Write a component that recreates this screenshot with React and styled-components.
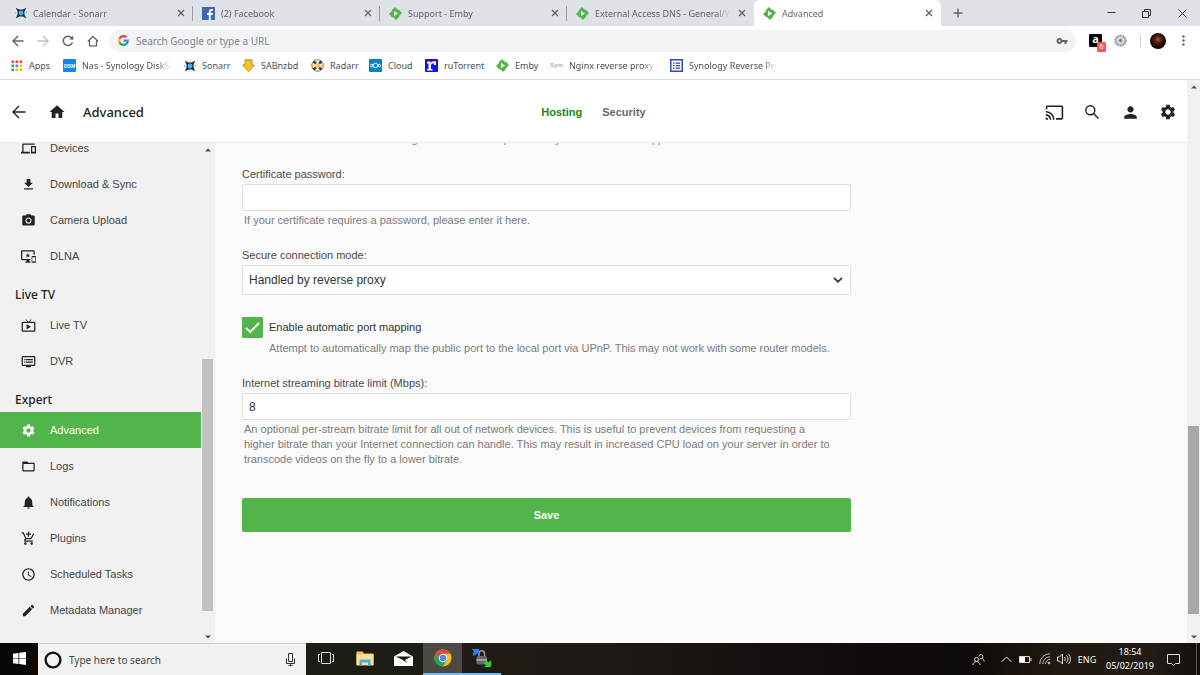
// src/App.jsx
import React, { useState } from 'react';
import styled, { createGlobalStyle } from 'styled-components';
import {
  MdAddShoppingCart,
  MdCast,
  MdDevices,
  MdDvr,
  MdEdit,
  MdFileDownload,
  MdFolderOpen,
  MdHome,
  MdImportantDevices,
  MdLiveTv,
  MdNotifications,
  MdPerson,
  MdPhotoCamera,
  MdSchedule,
  MdSettings,
  MdVpnKey,
} from 'react-icons/md';
import { SiEmby } from 'react-icons/si';

const uiFont = '"Noto Sans", "Open Sans", sans-serif';
const green = '#52b54b';

const GlobalStyle = createGlobalStyle`
  * {
    box-sizing: border-box;
  }

  body {
    margin: 0;
    font-family: "Liberation Sans", Arial, sans-serif;
    color: #333;
  }

  button, input, select {
    font: inherit;
    color: inherit;
  }

  a {
    color: inherit;
    text-decoration: none;
  }

  svg {
    display: block;
    flex: none;
  }
`;

const Screen = styled.div`
  display: flex;
  flex-direction: column;
  height: 100vh;
  overflow: hidden;
  background: #fff;
`;

const IconButton = styled.button`
  display: flex;
  align-items: center;
  justify-content: center;
  flex: none;
  width: ${(p) => p.$width || 24}px;
  padding: 0;
  border: none;
  background: transparent;
  color: ${(p) => p.$color || '#5f6368'};
  cursor: pointer;
`;

/* ---------- browser chrome ---------- */

const TabStrip = styled.div`
  display: flex;
  height: 26px;
  padding-left: 6px;
  background: #dee1e6;
  font-family: ${uiFont};
  font-size: 9px;
  color: #606367;
`;

const TabItem = styled.div`
  display: flex;
  align-items: center;
  flex: 0 1 187px;
  min-width: 0;
  padding: 0 5px 0 9px;
  gap: 6px;
  border-radius: 6px 6px 0 0;
  background: ${(p) => (p.$active ? '#fff' : 'transparent')};
`;

const TabDivider = styled.span`
  flex: none;
  width: 1px;
  height: 15px;
  margin-right: -5px;
  background: ${(p) => (p.$visible ? '#9a9da1' : 'transparent')};
`;

const TabTitle = styled.a`
  flex: 1;
  min-width: 0;
  overflow: hidden;
  white-space: nowrap;
  mask-image: linear-gradient(to right, #000 calc(100% - 14px), transparent);
`;

const WindowControls = styled.div`
  display: flex;
  margin-left: auto;
`;

const Toolbar = styled.div`
  display: flex;
  align-items: center;
  height: 29px;
  padding: 0 4px 0 5px;
  font-family: ${uiFont};
`;

const Omnibox = styled.div`
  display: flex;
  align-items: center;
  flex: 1;
  height: 22px;
  margin: 0 7px 0 4px;
  padding: 0 8px 0 9px;
  gap: 7px;
  border-radius: 11px;
  background: #f1f3f4;
`;

const OmniboxInput = styled.input`
  flex: 1;
  min-width: 0;
  padding: 0;
  border: none;
  outline: none;
  background: transparent;
  font-size: 10px;

  &::placeholder {
    color: #80868b;
    opacity: 1;
  }
`;

const ExtensionIcon = styled.span`
  position: relative;
  display: block;
  width: 13px;
  height: 13px;
  border-radius: 1px;
  background: #000;
  color: #fff;
  text-align: center;
  font: bold 11px/9px "Open Sans", sans-serif;
`;

const ExtensionBadge = styled.span`
  position: absolute;
  left: 8px;
  top: 8px;
  width: 9px;
  height: 10px;
  border-radius: 1px;
  background: #ff5252;
  font: 7px/10px ${uiFont};
  text-align: center;
`;

const ToolbarDivider = styled.span`
  width: 1px;
  height: 12px;
  margin: 0 5px 0 7px;
  background: #ccc;
`;

const Avatar = styled.span`
  width: 16px;
  height: 16px;
  border-radius: 50%;
  background: radial-gradient(circle at 50% 40%, #b5552c 0, #5a1d10 25%, #120a0b 60%, #050406 100%);
`;

const BookmarksBar = styled.nav`
  display: flex;
  align-items: center;
  height: 24px;
  padding: 0 11px 3px;
  gap: 13px;
  font-family: ${uiFont};
  font-size: 9px;
  color: #4a4d51;
`;

const Bookmark = styled.a`
  display: flex;
  align-items: center;
  gap: 6px;
  white-space: nowrap;
`;

const BookmarkLabel = styled.span`
  width: ${(p) => p.$width}px;
  overflow: ${(p) => (p.$fade ? 'hidden' : 'visible')};
  mask-image: ${(p) => (p.$fade ? 'linear-gradient(to right, #000 calc(100% - 14px), transparent)' : 'none')};
`;

/* ---------- page ---------- */

const Viewport = styled.div`
  display: flex;
  flex: 1;
  min-height: 0;
  border-top: 1px solid #dcdcdc;
`;

const Page = styled.div`
  display: flex;
  flex-direction: column;
  flex: 1;
  min-width: 0;
`;

const Header = styled.header`
  display: grid;
  grid-template-columns: 1fr auto 1fr;
  align-items: center;
  flex: none;
  height: 63px;
  padding-top: 2px;
  border-bottom: 1px solid #ebebeb;
  background: #fff;
  color: #222;
`;

const HeaderLeft = styled.div`
  display: flex;
  align-items: center;
  padding-left: 9px;
  gap: 18px;
`;

const HeaderRight = styled.div`
  display: flex;
  align-items: center;
  justify-content: flex-end;
  padding-right: 9px;
  gap: 18px;
`;

const PageTitle = styled.h1`
  margin: 0 0 0 -2px;
  font: 500 13px/18px ${uiFont};
  color: #222;
`;

const HeaderTabs = styled.nav`
  display: flex;
  gap: 20px;
`;

const HeaderTab = styled.button`
  padding: 0;
  border: none;
  background: transparent;
  font-size: 11px;
  font-weight: 700;
  line-height: 18px;
  color: ${(p) => (p.$active ? '#148a14' : '#6a6a6a')};
  cursor: pointer;
`;

const Body = styled.div`
  display: flex;
  flex: 1;
  min-height: 0;
`;

const Sidebar = styled.aside`
  display: flex;
  flex: none;
  width: 215px;
  padding-right: 1px;
  background: #f1f1f1;
`;

const SidebarClip = styled.div`
  flex: 1;
  overflow: hidden;
`;

const SidebarNav = styled.nav`
  margin-top: -13px;
`;

const SidebarHeading = styled.h2`
  height: 33px;
  margin: 0;
  padding: 12px 0 0 15px;
  font: 500 12px/18px ${uiFont};
  color: #222;
`;

const SidebarLink = styled.a`
  display: flex;
  align-items: center;
  height: 36px;
  padding-left: 21px;
  gap: 14px;
  font-size: 11px;
  line-height: 15px;
  background: ${(p) => (p.$active ? green : 'transparent')};
  color: ${(p) => (p.$active ? '#fff' : '#444')};

  svg {
    width: 15px;
    height: 15px;
    color: ${(p) => (p.$active ? '#fff' : '#222')};
  }
`;

const ScrollTrack = styled.div`
  display: flex;
  flex-direction: column;
  align-items: center;
  flex: none;
  width: 13px;
  padding: 5px 0 4px;
  background: ${(p) => p.$background || 'transparent'};
  color: #505050;
`;

const ScrollSpace = styled.div`
  flex: ${(p) => p.$grow} 0 0;
`;

const ScrollThumb = styled.div`
  flex: ${(p) => p.$grow} 0 0;
  width: 11px;
  background: ${(p) => p.$color};
`;

const Content = styled.main`
  flex: 1;
  min-width: 0;
  overflow: hidden;
  padding: 0 27px;
  background: #fafafa;
`;

const Form = styled.form`
  display: flex;
  flex-direction: column;
  max-width: 609px;
`;

/* tail of the field that is scrolled under the header */
const ScrolledHelp = styled.div`
  display: flex;
  align-items: flex-end;
  height: 4px;
  margin-bottom: 20px;
  overflow: hidden;
`;

const Field = styled.div`
  display: flex;
  flex-direction: column;
  margin-bottom: ${(p) => p.$space || 20}px;
`;

const FieldLabel = styled.label`
  margin-bottom: 2px;
  font-size: 11px;
  line-height: 15px;
  color: #4a4a4a;
`;

const TextInput = styled.input`
  width: 100%;
  height: 27px;
  padding: 0 6px;
  border: 1px solid #dedede;
  border-radius: 2px;
  background: #fff;
  font-size: 12px;
`;

const HelpText = styled.div`
  padding: ${(p) => (p.$indent ? '3px 0 0 27px' : '2px 17px 0 2px')};
  font-size: 11px;
  line-height: 15px;
  color: #7c7c7c;
`;

const SelectWrap = styled.div`
  display: grid;
  align-items: center;

  > * {
    grid-area: 1 / 1;
  }

  > svg {
    justify-self: end;
    margin-right: 8px;
    pointer-events: none;
  }
`;

const Select = styled.select`
  width: 100%;
  height: 30px;
  padding: 0 6px;
  border: 1px solid #dedede;
  border-radius: 2px;
  background: #fff;
  font-size: 12px;
  appearance: none;
`;

const CheckRow = styled.label`
  display: flex;
  align-items: center;
  gap: 6px;
  margin-top: 2px;
  font-size: 11px;
  line-height: 15px;
`;

const CheckBoxWrap = styled.span`
  display: grid;
  place-items: center;

  > * {
    grid-area: 1 / 1;
  }

  > svg {
    pointer-events: none;
  }
`;

const CheckBox = styled.input`
  width: 21px;
  height: 21px;
  margin: 0;
  border: 1px solid ${green};
  border-radius: 1px;
  background: #fff;
  appearance: none;

  &:checked {
    background: ${green};
  }
`;

const SaveButton = styled.button`
  height: 34px;
  border: none;
  border-radius: 2px;
  background: ${green};
  color: #fff;
  font-size: 11px;
  font-weight: 700;
  cursor: pointer;
`;

/* ---------- taskbar ---------- */

const Taskbar = styled.footer`
  display: flex;
  flex: none;
  height: 32px;
  background: linear-gradient(to right, #0a0604 0, #1f1c15 26%, #1f1a15 50%, #16110e 62%, #0d0908 80%, #22190f 88%, #211c15 96%, #140f0b 100%);
  color: #fff;
  font-family: ${uiFont};
`;

const TaskSearch = styled.div`
  display: flex;
  align-items: center;
  width: 268px;
  padding: 0 9px 0 6px;
  gap: 7px;
  border-top: 1px solid #d0d0d0;
  background: #f2f2f2;
  color: #333;
`;

const TaskSearchInput = styled.input`
  flex: 1;
  min-width: 0;
  padding: 0;
  border: none;
  outline: none;
  background: transparent;
  font-size: 10px;

  &::placeholder {
    color: #444;
    opacity: 1;
  }
`;

const TaskButton = styled.button`
  display: flex;
  align-items: center;
  justify-content: center;
  width: ${(p) => p.$width || 39}px;
  padding: 0;
  border: none;
  border-bottom: 2px solid ${(p) => (p.$open ? '#76b9ed' : 'transparent')};
  background: ${(p) => (p.$focused ? '#4d4944' : 'transparent')};
  color: #ddd;
`;

const Tray = styled.div`
  display: flex;
  align-items: center;
  margin-left: auto;
`;

const TrayText = styled.span`
  width: 28px;
  text-align: center;
  font-size: 9px;
`;

const Clock = styled.time`
  display: flex;
  flex-direction: column;
  align-items: center;
  width: 58px;
  font-size: 9px;
  line-height: 14px;
`;

const ShowDesktop = styled.button`
  align-self: stretch;
  width: 4px;
  margin-left: 8px;
  padding: 0;
  border: none;
  border-left: 1px solid #5d5853;
  background: transparent;
`;

/* ---------- icons ---------- */

const Stroke = ({ size = 12, width = 1, box = 12, children }) => (
  <svg width={size} height={size} viewBox={`0 0 ${box} ${box}`} fill="none" stroke="currentColor" strokeWidth={width}>
    {children}
  </svg>
);

const CloseIcon = () => (
  <Stroke size={8} box={8} width={1.3}>
    <path d="M1 1l6 6M7 1L1 7" />
  </Stroke>
);

const EmbyIcon = () => <SiEmby size={13} color={green} />;

const SonarrIcon = () => (
  <svg width="12" height="12" viewBox="0 0 24 24">
    <circle cx="12" cy="12" r="11.500" fill="#eaf0f3" />
    <path d="M1.500 1.500L9 5h6l7.500-3.500L19 9v6l3.500 7.500L15 19H9l-7.500 3.500L5 15V9z" fill="#22303a" />
    <circle cx="12" cy="12" r="4.800" fill="#35b6e8" />
    <path d="M0 12h3M21 12h3" stroke="#35b6e8" strokeWidth="2" />
  </svg>
);

const RadarrIcon = () => (
  <svg width="13" height="13" viewBox="0 0 26 26">
    <circle cx="13" cy="13" r="11.500" fill="#fdf6e4" stroke="#4a4a4a" strokeWidth="1.500" />
    <path d="M5 5l5 4M21 5l-5 4M5 21l5-4M21 21l-5-4" stroke="#3a3a3a" strokeWidth="5" />
    <path d="M2 9l4 4-4 4zM24 9l-4 4 4 4z" fill="#eebc5a" />
    <circle cx="13" cy="13" r="5" fill="#f6c453" />
  </svg>
);

const FacebookIcon = () => (
  <svg width="13" height="13" viewBox="0 0 26 26">
    <rect width="26" height="26" fill="#4267b2" />
    <path d="M17.500 26V16h3.700l.6-4h-4.300V9.500c0-1.300.6-2 2.200-2h2.300V4c-.6-.1-1.700-.2-2.900-.2-3.400 0-5.400 1.900-5.400 5.300V12H10v4h3.700v10z" fill="#fff" />
  </svg>
);

const GoogleIcon = () => (
  <svg width="11" height="11" viewBox="0 0 48 48">
    <path fill="#EA4335" d="M24 9.500c3.540 0 6.710 1.220 9.210 3.600l6.850-6.850C35.900 2.380 30.470 0 24 0 14.620 0 6.510 5.380 2.560 13.220l7.980 6.190C12.430 13.720 17.740 9.500 24 9.500z" />
    <path fill="#4285F4" d="M46.980 24.550c0-1.570-.15-3.090-.38-4.550H24v9.020h12.940c-.58 2.960-2.260 5.480-4.780 7.180l7.730 6c4.510-4.180 7.090-10.360 7.090-17.650z" />
    <path fill="#FBBC05" d="M10.530 28.590A14.500 14.500 0 0 1 9.770 24c0-1.600.27-3.140.76-4.590l-7.980-6.190A23.900 23.900 0 0 0 0 24c0 3.880.92 7.540 2.560 10.780z" />
    <path fill="#34A853" d="M24 48c6.480 0 11.930-2.130 15.890-5.810l-7.730-6c-2.150 1.450-4.920 2.300-8.160 2.300-6.260 0-11.570-4.220-13.470-9.910l-7.980 6.190C6.510 42.620 14.620 48 24 48z" />
  </svg>
);

const AppsIcon = () => (
  <svg width="12" height="12" viewBox="0 0 12 12">
    {['#ea4335', '#ea4335', '#ea4335', '#34a853', '#4285f4', '#fbbc05', '#34a853', '#fbbc05', '#fbbc05'].map((c, i) => (
      <rect key={i} x={(i % 3) * 4 + 0.5} y={Math.floor(i / 3) * 4 + 0.5} width="2.600" height="2.600" fill={c} />
    ))}
  </svg>
);

const DsmIcon = () => (
  <svg width="13" height="13" viewBox="0 0 26 26">
    <rect width="26" height="26" rx="2" fill="#1089e8" />
    <text x="13" y="17" fontSize="10" fontWeight="700" fill="#fff" textAnchor="middle" fontFamily="Liberation Sans">DSM</text>
  </svg>
);

const SabIcon = () => (
  <svg width="13" height="13" viewBox="0 0 26 26">
    <path d="M6 1.500h14V12h5L13 25 1 12h5z" fill="#fcc419" stroke="#9a7a24" strokeWidth="1.500" />
  </svg>
);

const CloudIcon = () => (
  <svg width="13" height="13" viewBox="0 0 26 26">
    <rect width="26" height="26" rx="2" fill="#0082c9" />
    <g fill="none" stroke="#fff" strokeWidth="2">
      <circle cx="13" cy="13" r="4.500" />
      <circle cx="5.500" cy="13" r="2.500" />
      <circle cx="20.500" cy="13" r="2.500" />
    </g>
  </svg>
);

const RuTorrentIcon = () => (
  <svg width="13" height="13" viewBox="0 0 26 26">
    <rect width="26" height="26" rx="2" fill="#1212f0" />
    <path d="M4 5h7v3c2-3 6-4 11-3v7h-4V9c-4 0-6 1-6 4v7h3v3H4v-3h3V9H4z" fill="#fff" />
  </svg>
);

const SynoIcon = () => (
  <svg width="13" height="13" viewBox="0 0 26 26">
    <text x="13" y="16" fontSize="11" fill="#888" textAnchor="middle" fontFamily="Liberation Sans">Syno</text>
  </svg>
);

const ListIcon = () => (
  <svg width="13" height="13" viewBox="0 0 26 26">
    <rect x="1.500" y="1.500" width="23" height="23" fill="#fff" stroke="#2f4fa5" strokeWidth="3" />
    <path d="M6 8h3M11 8h9M6 13h3M11 13h9M6 18h3M11 18h9" stroke="#2f4fa5" strokeWidth="2.500" />
  </svg>
);

const ArrowUp = () => (
  <svg width="6" height="4" viewBox="0 0 6 4"><path d="M0 3.500L3 0.500 6 3.500z" fill="currentColor" /></svg>
);

const ArrowDown = () => (
  <svg width="6" height="4" viewBox="0 0 6 4"><path d="M0 0.500L3 3.500 6 0.500z" fill="currentColor" /></svg>
);

const FolderTaskIcon = () => (
  <svg width="18" height="15" viewBox="0 0 36 30">
    <path d="M1 1h12l3 4h19v24H1z" fill="#f5c451" />
    <path d="M1 7h34v21H1z" fill="#fde293" />
    <path d="M7 29V17h22v12h-5v-6H12v6z" fill="#3fb3e8" />
  </svg>
);

const MailTaskIcon = () => (
  <svg width="19" height="15" viewBox="0 0 38 30">
    <path d="M0 11L19 0l19 11v19H0z" fill="#fff" />
    <path d="M3 11h32L22 18l5 6-13-8z" fill="#1d1a15" />
  </svg>
);

const ChromeTaskIcon = () => (
  <svg width="18" height="18" viewBox="0 0 36 36">
    <circle cx="18" cy="18" r="17" fill="#fbc116" />
    <path d="M3.300 9.500A17 17 0 0 1 32.700 9.500H18L10.600 22.200z" fill="#dd4b3e" />
    <path d="M3.300 9.500A17 17 0 0 0 18 35l7.400-12.800H10.600z" fill="#1da462" />
    <circle cx="18" cy="18" r="8.300" fill="#fff" />
    <circle cx="18" cy="18" r="6.600" fill="#4a8af4" />
  </svg>
);

const VpnTaskIcon = () => (
  <svg width="19" height="18" viewBox="0 0 38 36">
    <path d="M14 16V9a5.500 5.500 0 0 1 11 0v7" fill="none" stroke="#999" strokeWidth="3" />
    <rect x="9" y="14" width="21" height="17" rx="3" fill="#66696c" />
    <rect x="9" y="20" width="21" height="4" fill="#9da0a3" />
    <path d="M0 0h14v12l-4-3-4 4H2V8l2-3z" fill="#2f7df0" />
    <path d="M38 36H24l4-4-4-4 5-5 4 4 5-5z" fill="#2fd22f" />
  </svg>
);

const PeopleIcon = () => (
  <Stroke size={13} box={26} width={2}>
    <circle cx="9" cy="13" r="4" />
    <path d="M2 24c0-9 14-9 14 0M14 7a4 4 0 1 1 5 4c4 0 5 3 5 6M15 13c1-1 2-2 4-2" />
  </Stroke>
);

const browserTabs = [
  { title: 'Calendar - Sonarr', icon: <SonarrIcon /> },
  { title: '(2) Facebook', icon: <FacebookIcon /> },
  { title: 'Support - Emby', icon: <EmbyIcon /> },
  { title: 'External Access DNS - General/Windows', icon: <EmbyIcon /> },
  { title: 'Advanced', icon: <EmbyIcon />, active: true },
];

const bookmarks = [
  { label: 'Apps', icon: <AppsIcon />, width: 21 },
  { label: 'Nas - Synology DiskStation', icon: <DsmIcon />, width: 89, fade: true },
  { label: 'Sonarr', icon: <SonarrIcon />, width: 27 },
  { label: 'SABnzbd', icon: <SabIcon />, width: 37 },
  { label: 'Radarr', icon: <RadarrIcon />, width: 26 },
  { label: 'Cloud', icon: <CloudIcon />, width: 24 },
  { label: 'ruTorrent', icon: <RuTorrentIcon />, width: 39 },
  { label: 'Emby', icon: <EmbyIcon />, width: 22 },
  { label: 'Nginx reverse proxy - Synology', icon: <SynoIcon />, width: 88, fade: true },
  { label: 'Synology Reverse Proxy', icon: <ListIcon />, width: 88, fade: true },
];

const sidebarGroups = [
  {
    items: [
      { label: 'Devices', Icon: MdDevices },
      { label: 'Download & Sync', Icon: MdFileDownload },
      { label: 'Camera Upload', Icon: MdPhotoCamera },
      { label: 'DLNA', Icon: MdImportantDevices },
    ],
  },
  {
    title: 'Live TV',
    items: [
      { label: 'Live TV', Icon: MdLiveTv },
      { label: 'DVR', Icon: MdDvr },
    ],
  },
  {
    title: 'Expert',
    items: [
      { label: 'Advanced', Icon: MdSettings, active: true },
      { label: 'Logs', Icon: MdFolderOpen },
      { label: 'Notifications', Icon: MdNotifications },
      { label: 'Plugins', Icon: MdAddShoppingCart },
      { label: 'Scheduled Tasks', Icon: MdSchedule },
      { label: 'Metadata Manager', Icon: MdEdit },
    ],
  },
];

function BrowserChrome() {
  return (
    <>
      <TabStrip>
        {browserTabs.map((tab, i) => (
          <TabItem key={tab.title} $active={tab.active}>
            {tab.icon}
            <TabTitle href="#tab">{tab.title}</TabTitle>
            <IconButton $width={11} aria-label={`Close ${tab.title}`}>
              <CloseIcon />
            </IconButton>
            <TabDivider $visible={i < 3} />
          </TabItem>
        ))}
        <IconButton $width={34} aria-label="New tab">
          <Stroke size={10} box={10} width={1.4}><path d="M5 0.500v9M0.500 5h9" /></Stroke>
        </IconButton>
        <WindowControls>
          <IconButton $width={35} $color="#333" aria-label="Minimize">
            <Stroke size={9} box={9}><path d="M0.500 3.500h8" /></Stroke>
          </IconButton>
          <IconButton $width={35} $color="#333" aria-label="Restore">
            <Stroke size={9} box={9}><path d="M0.500 2.500h6v6h-6zM2.500 2.500v-2h6v6h-2" /></Stroke>
          </IconButton>
          <IconButton $width={36} $color="#333" aria-label="Close window">
            <Stroke size={9} box={9}><path d="M0.500 0.500l8 8M8.500 0.500l-8 8" /></Stroke>
          </IconButton>
        </WindowControls>
      </TabStrip>

      <Toolbar>
        <IconButton $width={25} aria-label="Back">
          <Stroke box={12} width={1.4}><path d="M11.500 6H1.500M6 1L1 6l5 5" /></Stroke>
        </IconButton>
        <IconButton $width={25} $color="#bdc1c6" aria-label="Forward">
          <Stroke box={12} width={1.4}><path d="M0.500 6h10M6 1l5 5-5 5" /></Stroke>
        </IconButton>
        <IconButton $width={25} aria-label="Reload">
          <Stroke box={12} width={1.5}>
            <path d="M10.400 7.500A4.700 4.700 0 1 1 9.500 2.700L11 4.200" />
            <path d="M11.200 0.600v4H7.200z" fill="currentColor" stroke="none" />
          </Stroke>
        </IconButton>
        <IconButton $width={25} aria-label="Home">
          <Stroke box={12} width={1.3}><path d="M0.800 6.500L6 1.300l5.200 5.200M2.500 5.500v5.300h7V5.500" /></Stroke>
        </IconButton>
        <Omnibox>
          <GoogleIcon />
          <OmniboxInput aria-label="Address" placeholder="Search Google or type a URL" />
          <MdVpnKey size={12} color="#5f6368" />
        </Omnibox>
        <IconButton $width={25} aria-label="Amazon Assistant">
          <ExtensionIcon>
            a
            <ExtensionBadge>6</ExtensionBadge>
          </ExtensionIcon>
        </IconButton>
        <IconButton $width={25} $color="#9a9a9a" aria-label="Extension">
          <svg width="13" height="13" viewBox="0 0 26 26">
            <circle cx="13" cy="13" r="11" fill="#b9b9b9" stroke="#9c9c9c" strokeWidth="3" strokeDasharray="3 2" />
            <circle cx="13" cy="13" r="6" fill="none" stroke="#f0f0f0" strokeWidth="2" />
            <circle cx="13" cy="13" r="2.500" fill="#777" />
          </svg>
        </IconButton>
        <ToolbarDivider />
        <IconButton $width={24} aria-label="Profile"><Avatar /></IconButton>
        <IconButton $width={26} aria-label="Menu">
          <svg width="3" height="11" viewBox="0 0 3 11" fill="currentColor">
            <circle cx="1.500" cy="1.500" r="1.200" />
            <circle cx="1.500" cy="5.500" r="1.200" />
            <circle cx="1.500" cy="9.500" r="1.200" />
          </svg>
        </IconButton>
      </Toolbar>

      <BookmarksBar>
        {bookmarks.map((b) => (
          <Bookmark key={b.label} href="#bookmark">
            {b.icon}
            <BookmarkLabel $width={b.width} $fade={b.fade}>{b.label}</BookmarkLabel>
          </Bookmark>
        ))}
      </BookmarksBar>
    </>
  );
}

function PageHeader() {
  return (
    <Header>
      <HeaderLeft>
        <IconButton $width={20} $color="#222" aria-label="Back">
          <Stroke size={14} box={14} width={1.4}><path d="M13.500 7H1.500M7 1L1 7l6 6" /></Stroke>
        </IconButton>
        <IconButton $width={20} $color="#222" aria-label="Home"><MdHome size={18} /></IconButton>
        <PageTitle>Advanced</PageTitle>
      </HeaderLeft>
      <HeaderTabs>
        <HeaderTab $active>Hosting</HeaderTab>
        <HeaderTab>Security</HeaderTab>
      </HeaderTabs>
      <HeaderRight>
        <IconButton $width={20} $color="#222" aria-label="Cast"><MdCast size={19} /></IconButton>
        <IconButton $width={20} $color="#222" aria-label="Search">
          <Stroke size={14} box={14} width={1.4}>
            <circle cx="5.300" cy="5.300" r="4.500" />
            <path d="M8.600 8.600l4.800 4.800" />
          </Stroke>
        </IconButton>
        <IconButton $width={20} $color="#222" aria-label="User"><MdPerson size={19} /></IconButton>
        <IconButton $width={20} $color="#222" aria-label="Settings"><MdSettings size={18} /></IconButton>
      </HeaderRight>
    </Header>
  );
}

function SideMenu() {
  return (
    <Sidebar>
      <SidebarClip>
        <SidebarNav>
          {sidebarGroups.map((group, i) => (
            <React.Fragment key={i}>
              {group.title && <SidebarHeading>{group.title}</SidebarHeading>}
              {group.items.map(({ label, Icon, active }) => (
                <SidebarLink key={label} href="#menu" $active={active}>
                  <Icon />
                  {label}
                </SidebarLink>
              ))}
            </React.Fragment>
          ))}
        </SidebarNav>
      </SidebarClip>
      <ScrollTrack>
        <ArrowUp />
        <ScrollSpace $grow={207} />
        <ScrollThumb $grow={252} $color="#c1c1c1" />
        <ScrollSpace $grow={24} />
        <ArrowDown />
      </ScrollTrack>
    </Sidebar>
  );
}

function HostingForm() {
  const [bitrate, setBitrate] = useState('8');
  const [portMapping, setPortMapping] = useState(true);

  return (
    <Form onSubmit={(e) => e.preventDefault()}>
      <ScrolledHelp>
        <HelpText>The server should create its self-signed certificate as provided by the server for all apps.</HelpText>
      </ScrolledHelp>

      <Field>
        <FieldLabel htmlFor="certPassword">Certificate password:</FieldLabel>
        <TextInput id="certPassword" type="password" />
        <HelpText>If your certificate requires a password, please enter it here.</HelpText>
      </Field>

      <Field>
        <FieldLabel htmlFor="connectionMode">Secure connection mode:</FieldLabel>
        <SelectWrap>
          <Select id="connectionMode" defaultValue="proxy">
            <option value="proxy">Handled by reverse proxy</option>
          </Select>
          <Stroke size={10} box={10} width={1.8}><path d="M1 2.800l4 4 4-4" /></Stroke>
        </SelectWrap>
      </Field>

      <Field>
        <CheckRow>
          <CheckBoxWrap>
            <CheckBox type="checkbox" checked={portMapping} onChange={(e) => setPortMapping(e.target.checked)} />
            <svg width="15" height="12" viewBox="0 0 15 12" fill="none" stroke="#fff" strokeWidth="1.900">
              <path d="M1 5.800l4.200 4.200L14 1" />
            </svg>
          </CheckBoxWrap>
          Enable automatic port mapping
        </CheckRow>
        <HelpText $indent>
          Attempt to automatically map the public port to the local port via UPnP. This may not work with some router models.
        </HelpText>
      </Field>

      <Field $space={31}>
        <FieldLabel htmlFor="bitrate">Internet streaming bitrate limit (Mbps):</FieldLabel>
        <TextInput id="bitrate" value={bitrate} onChange={(e) => setBitrate(e.target.value)} />
        <HelpText>
          An optional per-stream bitrate limit for all out of network devices. This is useful to prevent devices from
          requesting a higher bitrate than your Internet connection can handle. This may result in increased CPU load on
          your server in order to transcode videos on the fly to a lower bitrate.
        </HelpText>
      </Field>

      <SaveButton type="submit">Save</SaveButton>
    </Form>
  );
}

function WindowsTaskbar() {
  return (
    <Taskbar>
      <TaskButton $width={38} aria-label="Start">
        <svg width="13" height="13" viewBox="0 0 26 26" fill="#fff">
          <path d="M0 3.500l11-1.600v10.500H0zM12.500 1.700L26 0v12.400H12.500zM0 13.700h11v10.500L0 22.500zM12.500 13.700H26V26l-13.500-1.800z" />
        </svg>
      </TaskButton>
      <TaskSearch>
        <svg width="18" height="18" viewBox="0 0 18 18" fill="none" stroke="#111" strokeWidth="2.400">
          <circle cx="9" cy="9" r="7.400" />
        </svg>
        <TaskSearchInput aria-label="Search Windows" placeholder="Type here to search" />
        <IconButton $width={13} $color="#333" aria-label="Voice search">
          <Stroke size={13} box={13}><path d="M4.500 0.500h4v8h-4zM2.500 5.500v5h8v-5M6.500 10.500v2M4.500 12.500h4" /></Stroke>
        </IconButton>
      </TaskSearch>
      <TaskButton aria-label="Task view">
        <Stroke size={16} box={16}><path d="M3.500 2.500h9v11h-9zM2 4.500H0.500v7H2M14 4.500h1.500v7H14" /></Stroke>
      </TaskButton>
      <TaskButton aria-label="File Explorer"><FolderTaskIcon /></TaskButton>
      <TaskButton aria-label="Mail"><MailTaskIcon /></TaskButton>
      <TaskButton $open $focused aria-label="Chrome"><ChromeTaskIcon /></TaskButton>
      <TaskButton $open aria-label="Remote connection"><VpnTaskIcon /></TaskButton>
      <Tray>
        <IconButton $width={36} $color="#ddd" aria-label="People"><PeopleIcon /></IconButton>
        <IconButton $width={20} $color="#ddd" aria-label="Show hidden icons">
          <Stroke size={11} box={11}><path d="M0.500 8l5-5 5 5" /></Stroke>
        </IconButton>
        <IconButton $width={19} $color="#ddd" aria-label="Battery">
          <Stroke size={13} box={13}>
            <path d="M0.500 3.500h10v6h-10zM12 5v3" />
            <path d="M1 4h5v5H1z" fill="#fff" stroke="none" />
          </Stroke>
        </IconButton>
        <IconButton $width={19} $color="#bbb" aria-label="Network">
          <Stroke size={12} box={12}>
            <path d="M0.700 11A10.300 10.300 0 0 1 11 0.700M3.700 11A7.300 7.300 0 0 1 11 3.700M6.500 11A4.500 4.500 0 0 1 11 6.500" />
            <circle cx="10" cy="10" r="1.300" fill="currentColor" stroke="none" />
          </Stroke>
        </IconButton>
        <IconButton $width={19} $color="#ddd" aria-label="Volume">
          <Stroke size={14} box={14}>
            <path d="M0.500 5h2l3-3v10l-3-3h-2zM7.500 5c1 1 1 3 0 4M9.500 3.500c2 2 2 5 0 7M11.500 2c2.500 3 2.500 7 0 10" />
          </Stroke>
        </IconButton>
        <TrayText>ENG</TrayText>
        <Clock>
          <span>18:54</span>
          <span>05/02/2019</span>
        </Clock>
        <IconButton $width={29} $color="#ddd" aria-label="Notifications">
          <Stroke size={13} box={13}><path d="M0.500 1.500h12v9h-4l-2 2-2-2h-4z" /></Stroke>
        </IconButton>
        <ShowDesktop aria-label="Show desktop" />
      </Tray>
    </Taskbar>
  );
}

function App() {
  return (
    <Screen>
      <GlobalStyle />
      <BrowserChrome />
      <Viewport>
        <Page>
          <PageHeader />
          <Body>
            <SideMenu />
            <Content>
              <HostingForm />
            </Content>
          </Body>
        </Page>
        <ScrollTrack $background="#f1f1f1">
          <ArrowUp />
          <ScrollSpace $grow={337} />
          <ScrollThumb $grow={188} $color="#a8a8a8" />
          <ScrollSpace $grow={21} />
          <ArrowDown />
        </ScrollTrack>
      </Viewport>
      <WindowsTaskbar />
    </Screen>
  );
}

export default App;
